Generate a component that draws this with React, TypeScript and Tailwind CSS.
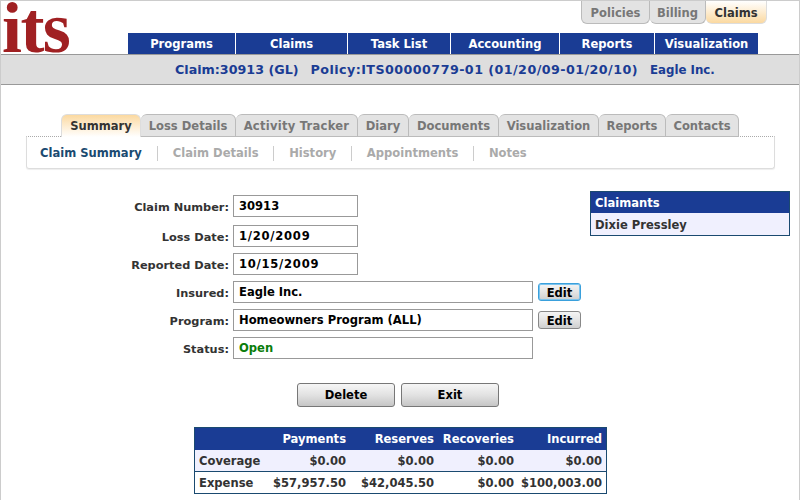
import React from 'react';

const mainNav = [
  { label: 'Programs', w: 'w-[107px]' },
  { label: 'Claims', w: 'w-[111px]' },
  { label: 'Task List', w: 'w-[102px]' },
  { label: 'Accounting', w: 'w-[108px]' },
  { label: 'Reports', w: 'w-[94px]' },
  { label: 'Visualization', w: 'w-[103px]' },
];

const tabs = [
  { label: 'Loss Details', w: 'w-[95px]' },
  { label: 'Activity Tracker', w: 'w-[122px] tracking-[0.25px]' },
  { label: 'Diary', w: 'w-[51px]' },
  { label: 'Documents', w: 'w-[90px]' },
  { label: 'Visualization', w: 'w-[100px]' },
  { label: 'Reports', w: 'w-[67px]' },
  { label: 'Contacts', w: 'w-[73px]' },
];

const subTabs = ['Claim Details', 'History', 'Appointments', 'Notes'];

const Field = ({ label, value, wide, green, date, className }: { label: string; value: string; wide?: boolean; green?: boolean; date?: boolean; className?: string }) => (
  <div className={`flex items-center ${className ?? ''}`}>
    <label className="w-[228px] pt-[4px] text-right text-[11.35px] text-[#333]">{label}</label>
    <div className={`ml-[4px] h-[22px] border border-[#999] bg-white pl-[5px] leading-[20px] ${wide ? 'w-[300px]' : 'w-[125px]'} ${green ? 'text-[#0a7d0a]' : 'text-black'} ${date ? 'tracking-[0.75px]' : ''}`}>
      {value}
    </div>
  </div>
);

const EditButton = ({ active }: { active?: boolean }) => (
  <button className={`ml-[5px] h-[18px] w-[43px] rounded-[3px] border bg-gradient-to-b from-[#f4f4f4] via-[#e4e4e4] to-[#cfcfcf] pt-[2px] leading-[15px] text-black ${active ? 'border-[#3aa0dc] shadow-[inset_0_0_0_1px_#7cc4ee]' : 'border-[#888]'}`}>
    Edit
  </button>
);

const ActionButton = ({ label }: { label: string }) => (
  <button className="h-[24px] w-[98px] rounded-[3px] border border-[#777] bg-gradient-to-b from-[#f6f6f6] via-[#e2e2e2] to-[#c6c6c6] pt-[2px] text-black">
    {label}
  </button>
);

const rows = [
  { name: 'Coverage', vals: ['$0.00', '$0.00', '$0.00', '$0.00'], bg: 'h-[21px] bg-[#f0f0fe]' },
  { name: 'Expense', vals: ['$57,957.50', '$42,045.50', '$0.00', '$100,003.00'], bg: 'h-[22px] bg-white border-t border-[#1a4a70]' },
];

export default function App() {
  return (
    <div className="h-[500px] w-[800px] overflow-hidden border-t border-l border-r border-[#ccc] bg-white text-[11.55px] leading-none font-bold font-['DejaVu_Sans',Verdana,sans-serif]">
      {/* header */}
      <div className="relative flex h-[53px] items-end">
        <svg className="absolute top-0 left-0" width="76" height="53">
          <text x="1" y="51" fontSize="72" letterSpacing="-1.6" fill="#a02022" className="font-['Liberation_Serif',serif]">its</text>
        </svg>
        <div className="absolute top-0 left-[580px] flex h-[23px]">
          <div className="flex w-[69px] items-center justify-center rounded-b-[6px] border border-t-0 border-[#bbb] bg-[#e3e3e3] pt-[3px] text-[#777]">Policies</div>
          <div className="flex w-[56px] items-center justify-center rounded-b-[6px] border border-t-0 border-l-0 border-[#bbb] bg-[#e3e3e3] pt-[3px] text-[#777]">Billing</div>
          <div className="flex w-[61px] items-center justify-center rounded-b-[6px] border border-t-0 border-l-0 border-[#ddd] bg-gradient-to-b from-white to-[#fbd9a0] pt-[3px] text-[#333]">Claims</div>
        </div>
        <div className="ml-[127px] flex h-[21px] gap-px">
          {mainNav.map((n) => (
            <div key={n.label} className={`flex items-center justify-center bg-[#1a3c94] pt-[3px] text-white ${n.w}`}>{n.label}</div>
          ))}
        </div>
      </div>

      {/* claim bar */}
      <div className="flex h-[31px] items-center gap-[12px] border-t border-b border-[#999] bg-[#dedede] pt-px pl-[174px] text-[12.7px] text-[#1a3c94]">
        <span>Claim:30913 (GL)</span>
        <span className="tracking-[0.44px]">Policy:ITS00000779-01 (01/20/09-01/20/10)</span>
        <span className="pt-px text-[11.8px]">Eagle Inc.</span>
      </div>

      {/* tabs */}
      <div className="relative z-10 mt-[29px] -mb-px ml-[60px] flex h-[23px]">
        <div className="flex w-[80px] items-center justify-center rounded-t-[6px] border-t border-l border-r border-[#ddd] bg-gradient-to-b from-[#fbd9a0] to-white pt-[2px] text-[#333]">Summary</div>
        {tabs.map((t) => (
          <div key={t.label} className={`flex items-center justify-center rounded-t-[6px] border border-l-0 border-[#bbb] bg-[#e3e3e3] pt-[2px] text-[#777] ${t.w}`}>{t.label}</div>
        ))}
      </div>
      <div className="ml-[25px] flex h-[33px] w-[749px] items-center rounded-b-[3px] border border-[#ddd] border-t-[#aaa] pt-[2px] pl-[13px] shadow-[0_1px_1px_#eee] [border-top-style:dotted]">
        <span className="pr-[15px] text-[#1a4a70]">Claim Summary</span>
        {subTabs.map((s) => (
          <span key={s} className="flex h-[15px] items-center border-l border-[#ccc] pr-[14.5px] pl-[15px] text-[#aaa]">{s}</span>
        ))}
      </div>

      {/* form + claimants */}
      <div className="relative mt-[26px] flex flex-col">
        <Field label="Claim Number:" value="30913" />
        <Field label="Loss Date:" value="1/20/2009" date className="mt-[8px]" />
        <Field label="Reported Date:" value="10/15/2009" date className="mt-[6px]" />
        <div className="mt-[6px] flex items-center">
          <Field label="Insured:" value="Eagle Inc." wide />
          <EditButton active />
        </div>
        <div className="mt-[6px] flex items-center">
          <Field label="Program:" value="Homeowners Program (ALL)" wide />
          <EditButton />
        </div>
        <Field label="Status:" value="Open" wide green className="mt-[6px]" />

        <div className="absolute top-[-4px] left-[589px] w-[200px] border border-[#1a4a70]">
          <div className="flex h-[21px] items-center bg-[#1a3c94] pt-[3px] pl-[4px] text-white">Claimants</div>
          <div className="flex h-[22px] items-center bg-[#f0f0fe] pt-[3px] pl-[4px] text-[#333]">Dixie Pressley</div>
        </div>

        {/* actions */}
        <div className="mt-[24px] ml-[296px] flex gap-[6px]">
          <ActionButton label="Delete" />
          <ActionButton label="Exit" />
        </div>

        {/* totals */}
        <div className="mt-[20px] ml-[193px] w-[413px] border border-[#1a4a70] text-[#333]">
          <div className="grid h-[22px] grid-cols-[75px_80px_88px_80px_88px] items-center bg-[#1a3c94] pt-[2px] text-right text-white">
            <span />
            <span className="pr-[4px]">Payments</span>
            <span className="pr-[4px]">Reserves</span>
            <span className="pr-[4px]">Recoveries</span>
            <span className="pr-[4px]">Incurred</span>
          </div>
          {rows.map((r) => (
            <div key={r.name} className={`grid grid-cols-[75px_80px_88px_80px_88px] items-center pt-[2px] text-right ${r.bg}`}>
              <span className="pl-[4px] text-left">{r.name}</span>
              {r.vals.map((v, i) => (
                <span key={i} className="pr-[4px] whitespace-nowrap">{v}</span>
              ))}
            </div>
          ))}
        </div>
      </div>
    </div>
  );
}
